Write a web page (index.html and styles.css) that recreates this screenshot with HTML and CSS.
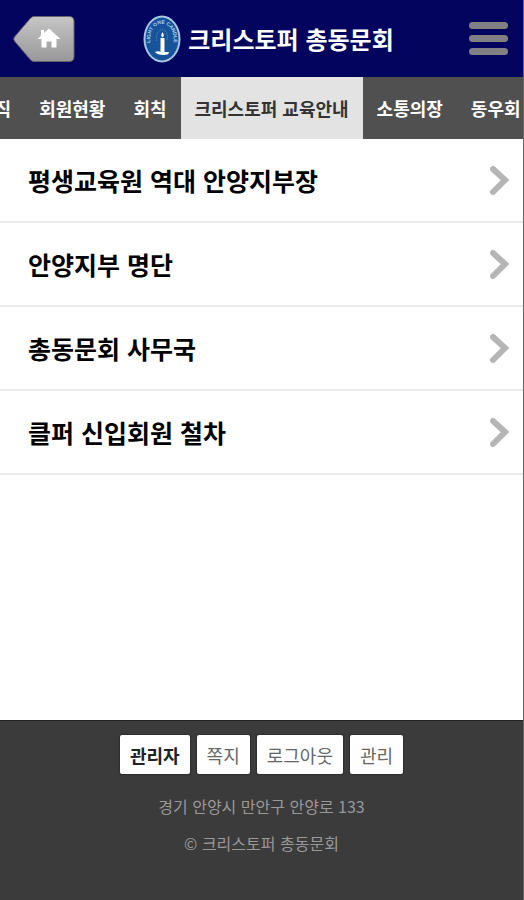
FILE: index.html
```html
<!DOCTYPE html>
<html lang="ko">
<head>
    <meta charset="UTF-8">
    <meta name="viewport" content="width=device-width, initial-scale=1">
    <title>크리스토퍼 총동문회</title>
    <link rel="stylesheet" href="styles.css">
</head>
<body>

    <header class="top">
        <a class="home" href="#" aria-label="홈">
            <svg width="62" height="48" viewBox="0 0 62 48">
                <defs>
                    <linearGradient id="silver" x1="0" y1="0" x2="0" y2="1">
                        <stop offset="0" stop-color="#c6c6c6"/>
                        <stop offset="1" stop-color="#989898"/>
                    </linearGradient>
                </defs>
                <path d="M21 1.500H56Q61 1.500 61 6.500V41.500Q61 46.500 56 46.500H21Q19 46.500 17.500 44.800L1.500 26Q0 24 1.500 22L17.500 3.200Q19 1.500 21 1.500Z" fill="url(#silver)" stroke="#66666f"/>
                <path d="M36 13.500L47.500 24H43.500V32.500H38.500V26.500H33.500V32.500H28.500V24H24.500L28 20.500V15H31V18Z" fill="#fff"/>
            </svg>
        </a>

        <h1 class="brand">
            <svg width="38" height="48" viewBox="0 0 38 48" aria-hidden="true">
                <defs><path id="arc" d="M8 32C2 1 36 1 30 32"/></defs>
                <ellipse cx="19" cy="24" rx="18.500" ry="23.500" fill="#a9c5e3"/>
                <ellipse cx="19" cy="24" rx="16.500" ry="21.500" fill="#16539a"/>
                <text class="brand-motto"><textPath href="#arc" startOffset="50%" text-anchor="middle">LIGHT ONE CANDLE</textPath></text>
                <path d="M13.500 26Q13 15 19 14.500Q25 15 24.500 26" fill="none" stroke="#5c8fc4" stroke-dasharray="1 1"/>
                <path d="M19.500 17Q22 21 19.500 22.500Q17 21 19.500 17Z" fill="#fff"/>
                <rect x="17.500" y="23" width="4" height="14" fill="#fff"/>
                <path d="M12 37Q15 35.500 18 37H26Q26 40 21 40Q14 40 12 37Z" fill="#fff"/>
            </svg>
            <span>크리스토퍼 총동문회</span>
        </h1>

        <button class="menu" type="button" aria-label="메뉴">
            <span></span>
            <span></span>
            <span></span>
        </button>
    </header>

    <nav class="tabs">
        <ul>
            <li><a href="#">조직</a></li>
            <li><a href="#">회원현황</a></li>
            <li><a href="#">회칙</a></li>
            <li><a class="on" href="#">크리스토퍼 교육안내</a></li>
            <li><a href="#">소통의장</a></li>
            <li><a href="#">동우회</a></li>
        </ul>
    </nav>

    <main>
        <ul class="list">
            <li><a href="#">평생교육원 역대 안양지부장 <svg width="20" height="30" viewBox="0 0 20 30"><path d="M4 4L16 15L4 27"/></svg></a></li>
            <li><a href="#">안양지부 명단 <svg width="20" height="30" viewBox="0 0 20 30"><path d="M4 4L16 15L4 27"/></svg></a></li>
            <li><a href="#">총동문회 사무국 <svg width="20" height="30" viewBox="0 0 20 30"><path d="M4 4L16 15L4 27"/></svg></a></li>
            <li><a href="#">클퍼 신입회원 철차 <svg width="20" height="30" viewBox="0 0 20 30"><path d="M4 4L16 15L4 27"/></svg></a></li>
        </ul>
    </main>

    <footer class="foot">
        <div class="foot-buttons">
            <button class="user" type="button">관리자</button>
            <button type="button">쪽지</button>
            <button type="button">로그아웃</button>
            <button type="button">관리</button>
        </div>
        <p>경기 안양시 만안구 안양로 133</p>
        <p>© 크리스토퍼 총동문회</p>
    </footer>

</body>
</html>
```
FILE: styles.css
```css
* {
    box-sizing: border-box;
}
body {
    margin: 0;
    min-height: 100vh;
    display: flex;
    flex-direction: column;
    font-family: "Noto Sans CJK KR", sans-serif;
    background: #fff;
    border-right: 1px solid #666;
}
ul {
    margin: 0;
    padding: 0;
    list-style: none;
}
a {
    color: inherit;
    text-decoration: none;
}
button {
    font-family: inherit;
    cursor: pointer;
}
svg {
    display: block;
    flex: none;
}

/* header */
.top {
    display: flex;
    align-items: center;
    justify-content: space-between;
    height: 77px;
    padding: 0 15px 0 13px;
    background: #03045e;
}
.brand {
    display: flex;
    align-items: center;
    gap: 7px;
    margin: 0;
    font-size: 24px;
    line-height: 36px;
    color: #fff;
    white-space: nowrap;
}
.brand-motto {
    font-family: "Liberation Sans", sans-serif;
    font-size: 5px;
    font-weight: bold;
    fill: #b9d3ee;
}
.menu {
    display: flex;
    flex-direction: column;
    align-items: flex-end;
    gap: 6px;
    width: 46px;
    padding: 0;
    border: 0;
    background: none;
}
.menu span {
    width: 39px;
    height: 7px;
    border-radius: 4px;
    background: #808083;
}

.tabs {
    overflow: hidden;
    background: #505050;
}
.tabs ul {
    display: flex;
    margin-left: -36px;
}
.tabs a {
    display: block;
    padding: 0 14px;
    font-size: 18px;
    font-weight: bold;
    line-height: 62px;
    color: #fff;
    white-space: nowrap;
}
.tabs .on {
    background: #e3e3e3;
    color: #333;
}

main {
    flex: 1;
}
.list a {
    display: flex;
    align-items: center;
    justify-content: space-between;
    height: 84px;
    padding: 0 14px 0 28px;
    border-bottom: 2px solid #ebebeb;
    font-size: 25px;
    font-weight: bold;
    color: #000;
}
.list path {
    fill: none;
    stroke: #b5b5b5;
    stroke-width: 6;
    stroke-linecap: round;
}

/* footer */
.foot {
    padding: 14px 0 38px;
    border-top: 1px solid #222;
    background: #3b3b3b;
    color: #999;
    text-align: center;
}
.foot-buttons {
    display: flex;
    justify-content: center;
    gap: 7px;
    margin-bottom: 14px;
}
.foot-buttons button {
    height: 39px;
    padding: 0 10px;
    border: 0;
    border-radius: 2px;
    background: #fff;
    font-size: 18px;
    line-height: 36px;
    color: #666;
    box-shadow: 0 0 2px #111;
}
.foot-buttons .user {
    font-weight: bold;
    color: #222;
}
.foot p {
    margin: 0;
    font-size: 16px;
    line-height: 37px;
}
```
